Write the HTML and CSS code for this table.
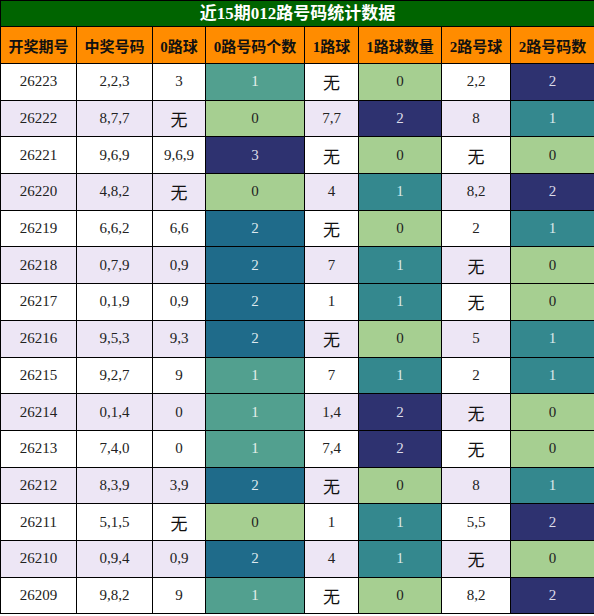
FILE: index.html
```html
<!DOCTYPE html>
<html lang="zh">
<head>
<meta charset="utf-8">
<title>近15期012路号码统计数据</title>
<link rel="stylesheet" href="styles.css">
</head>
<body>
<table class="stats">
  <colgroup>
    <col class="c1"><col class="c2"><col class="c3"><col class="c4">
    <col class="c5"><col class="c6"><col class="c7"><col class="c8">
  </colgroup>
  <thead>
    <tr class="title-row"><th colspan="8" class="title">近15期012路号码统计数据</th></tr>
    <tr class="head-row">
      <th>开奖期号</th><th>中奖号码</th><th>0路球</th><th>0路号码个数</th>
      <th>1路球</th><th>1路球数量</th><th>2路号球</th><th>2路号码数</th>
    </tr>
  </thead>
  <tbody>
    <tr><td>26223</td><td>2,2,3</td><td>3</td><td class="a1">1</td><td class="wu">无</td><td class="v0">0</td><td>2,2</td><td class="v2">2</td></tr>
    <tr class="alt"><td>26222</td><td>8,7,7</td><td class="wu">无</td><td class="v0">0</td><td>7,7</td><td class="v2">2</td><td>8</td><td class="v1">1</td></tr>
    <tr><td>26221</td><td>9,6,9</td><td>9,6,9</td><td class="v3">3</td><td class="wu">无</td><td class="v0">0</td><td class="wu">无</td><td class="v0">0</td></tr>
    <tr class="alt"><td>26220</td><td>4,8,2</td><td class="wu">无</td><td class="v0">0</td><td>4</td><td class="v1">1</td><td>8,2</td><td class="v2">2</td></tr>
    <tr><td>26219</td><td>6,6,2</td><td>6,6</td><td class="a2">2</td><td class="wu">无</td><td class="v0">0</td><td>2</td><td class="v1">1</td></tr>
    <tr class="alt"><td>26218</td><td>0,7,9</td><td>0,9</td><td class="a2">2</td><td>7</td><td class="v1">1</td><td class="wu">无</td><td class="v0">0</td></tr>
    <tr><td>26217</td><td>0,1,9</td><td>0,9</td><td class="a2">2</td><td>1</td><td class="v1">1</td><td class="wu">无</td><td class="v0">0</td></tr>
    <tr class="alt"><td>26216</td><td>9,5,3</td><td>9,3</td><td class="a2">2</td><td class="wu">无</td><td class="v0">0</td><td>5</td><td class="v1">1</td></tr>
    <tr><td>26215</td><td>9,2,7</td><td>9</td><td class="a1">1</td><td>7</td><td class="v1">1</td><td>2</td><td class="v1">1</td></tr>
    <tr class="alt"><td>26214</td><td>0,1,4</td><td>0</td><td class="a1">1</td><td>1,4</td><td class="v2">2</td><td class="wu">无</td><td class="v0">0</td></tr>
    <tr><td>26213</td><td>7,4,0</td><td>0</td><td class="a1">1</td><td>7,4</td><td class="v2">2</td><td class="wu">无</td><td class="v0">0</td></tr>
    <tr class="alt"><td>26212</td><td>8,3,9</td><td>3,9</td><td class="a2">2</td><td class="wu">无</td><td class="v0">0</td><td>8</td><td class="v1">1</td></tr>
    <tr><td>26211</td><td>5,1,5</td><td class="wu">无</td><td class="v0">0</td><td>1</td><td class="v1">1</td><td>5,5</td><td class="v2">2</td></tr>
    <tr class="alt"><td>26210</td><td>0,9,4</td><td>0,9</td><td class="a2">2</td><td>4</td><td class="v1">1</td><td class="wu">无</td><td class="v0">0</td></tr>
    <tr><td>26209</td><td>9,8,2</td><td>9</td><td class="a1">1</td><td class="wu">无</td><td class="v0">0</td><td>8,2</td><td class="v2">2</td></tr>
  </tbody>
</table>
</body>
</html>
```
FILE: styles.css
```css
html, body {
  margin: 0;
  padding: 0;
  background: #fff;
}

.stats {
  width: 594px;
  border-collapse: collapse;
  table-layout: fixed;
  font-family: "Liberation Serif", "Noto Sans CJK SC", serif;
  font-size: 15px;
  color: #222;
}

.c1 { width: 76px; }
.c2 { width: 76px; }
.c3 { width: 53px; }
.c4 { width: 99px; }
.c5 { width: 54px; }
.c6 { width: 83px; }
.c7 { width: 69px; }
.c8 { width: 84px; }

.stats th,
.stats td {
  border: 1px solid #000;
  padding: 0;
  text-align: center;
  vertical-align: middle;
}

.title {
  background: #006400;
  color: #fff;
  font-size: 17px;
  font-weight: bold;
  height: 25px;
  line-height: 25px;
  border-bottom: 2px solid #000;
}

.head-row th {
  background: #ff8c00;
  color: #111;
  font-size: 15px;
  font-weight: bold;
  height: 36px;
}

.stats td {
  height: 35.7px;
  background: #fff;
}

.stats tr.alt td {
  background: #ede6f5;
}

.stats td.wu {
  font-size: 17px;
  color: #111;
}

.stats td.v0,
.stats tr.alt td.v0 {
  background: #a6cf91;
  color: #222;
}

.stats td.a1,
.stats tr.alt td.a1 {
  background: #52a08f;
  color: #e4efe9;
}

.stats td.a2,
.stats tr.alt td.a2 {
  background: #1f6b8a;
  color: #dde8ee;
}

.stats td.v1,
.stats tr.alt td.v1 {
  background: #34888e;
  color: #dbeaea;
}

.stats td.v2,
.stats td.v3,
.stats tr.alt td.v2,
.stats tr.alt td.v3 {
  background: #2e3270;
  color: #dcdde9;
}
```
